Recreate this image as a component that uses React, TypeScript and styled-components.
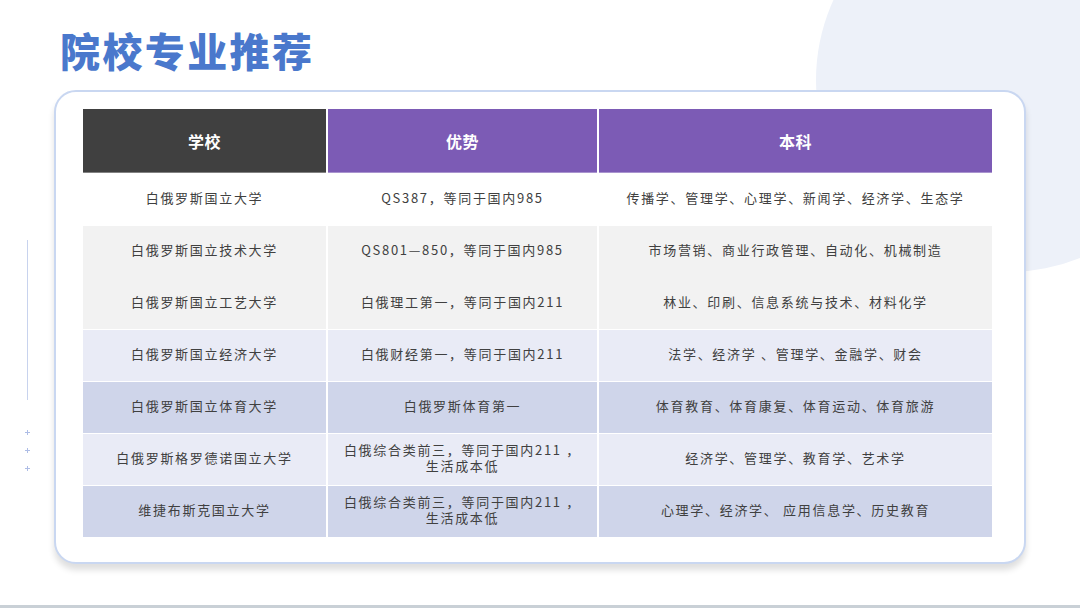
import React from "react";
import styled, { createGlobalStyle } from "styled-components";

const GlobalStyle = createGlobalStyle`
  html, body { margin: 0; padding: 0; background: #ffffff; }
  body { font-family: "Noto Sans CJK SC", "Noto Sans", sans-serif; }
  * { box-sizing: border-box; }
`;

const Page = styled.div`
  position: relative;
  width: 1080px;
  height: 608px;
  overflow: hidden;
  background: #ffffff;
  display: flex;
  flex-direction: column;
`;

const Circle = styled.div`
  position: absolute;
  left: 816px;
  top: -112px;
  width: 384px;
  height: 384px;
  border-radius: 50%;
  background: #edf1f9;
`;

const Main = styled.div`
  position: relative;
  flex: 1;
  display: flex;
  flex-direction: row;
`;

const Rail = styled.div`
  width: 54px;
  display: flex;
  flex-direction: column;
  align-items: center;
  padding-top: 240px;
`;

const RailLine = styled.div`
  width: 1px;
  height: 160px;
  background: #c8d3ee;
  margin-bottom: 30px;
`;

const Plus = styled.div`
  width: 5px;
  height: 5px;
  margin-bottom: 13px;
  background:
    linear-gradient(#aebde6, #aebde6) center / 5px 1px no-repeat,
    linear-gradient(#aebde6, #aebde6) center / 1px 5px no-repeat;
`;

const Content = styled.div`
  display: flex;
  flex-direction: column;
`;

const Title = styled.h1`
  margin: 30px 0 0 6px;
  height: 40px;
  font-family: "Noto Sans CJK SC", sans-serif;
  font-weight: 900;
  font-size: 40px;
  line-height: 40px;
  letter-spacing: 2.4px;
  color: #4a78cc;
`;

const Card = styled.div`
  margin-top: 20px;
  width: 972px;
  border: 2px solid #c9d7f1;
  border-radius: 22px;
  background: #ffffff;
  padding: 17px 32px 25px 27px;
  box-shadow: 0 6px 6px rgba(0, 0, 0, 0.13);
`;

const Table = styled.div`
  display: flex;
  flex-direction: column;
  width: 909px;
`;

const cols = "243px 269px 393px";

const HeadRow = styled.div`
  display: grid;
  grid-template-columns: ${cols};
  column-gap: 2px;
  height: 64px;
  background: #ffffff;
`;

const HeadCell = styled.div<{ $dark?: boolean }>`
  display: flex;
  align-items: center;
  justify-content: center;
  background: ${(p) => (p.$dark ? "#404040" : "#7c5bb5")};
  box-shadow: inset 0 -1px 0 rgba(255, 255, 255, 0.35);
  color: #ffffff;
  font-weight: 700;
  font-size: 16px;
  letter-spacing: 0.5px;
`;

type Tone = "white" | "grey" | "lilac" | "blue";
const toneBg: Record<Tone, string> = {
  white: "#ffffff",
  grey: "#f2f2f2",
  lilac: "#e9ebf6",
  blue: "#cfd5ea",
};

const Row = styled.div<{ $joined?: boolean }>`
  display: grid;
  grid-template-columns: ${cols};
  column-gap: 2px;
  height: 52px;
  background: #ffffff;
  border-top: ${(p) => (p.$joined ? "0" : "1px solid #ffffff")};
`;

const Cell = styled.div<{ $tone: Tone }>`
  display: flex;
  align-items: center;
  justify-content: center;
  text-align: center;
  padding-bottom: 3px;
  background: ${(p) => toneBg[p.$tone]};
  color: #404040;
  font-size: 13px;
  line-height: 16px;
  letter-spacing: 1.7px;
`;

const BottomBar = styled.div`
  height: 3px;
  background: #c9d0d6;
`;

type RowData = { school: string; adv: React.ReactNode; major: string; tone: Tone; joined?: boolean };

const twoLine = (
  <>
    白俄综合类前三，等同于国内211 ，
    <br />
    生活成本低
  </>
);

const rows: RowData[] = [
  { school: "白俄罗斯国立大学", adv: "QS387，等同于国内985", major: "传播学、管理学、心理学、新闻学、经济学、生态学", tone: "white" },
  { school: "白俄罗斯国立技术大学", adv: "QS801—850，等同于国内985", major: "市场营销、商业行政管理、自动化、机械制造", tone: "grey" },
  { school: "白俄罗斯国立工艺大学", adv: "白俄理工第一，等同于国内211", major: "林业、印刷、信息系统与技术、材料化学", tone: "grey", joined: true },
  { school: "白俄罗斯国立经济大学", adv: "白俄财经第一，等同于国内211", major: "法学、经济学 、管理学、金融学、财会", tone: "lilac" },
  { school: "白俄罗斯国立体育大学", adv: "白俄罗斯体育第一", major: "体育教育、体育康复、体育运动、体育旅游", tone: "blue" },
  { school: "白俄罗斯格罗德诺国立大学", adv: twoLine, major: "经济学、管理学、教育学、艺术学", tone: "lilac" },
  { school: "维捷布斯克国立大学", adv: twoLine, major: "心理学、经济学、 应用信息学、历史教育", tone: "blue" },
];

export default function App() {
  return (
    <>
      <GlobalStyle />
      <Page>
        <Circle />
        <Main>
          <Rail>
            <RailLine />
            <Plus />
            <Plus />
            <Plus />
          </Rail>
          <Content>
            <Title>院校专业推荐</Title>
            <Card>
              <Table>
                <HeadRow>
                  <HeadCell $dark>学校</HeadCell>
                  <HeadCell>优势</HeadCell>
                  <HeadCell>本科</HeadCell>
                </HeadRow>
                {rows.map((r, i) => (
                  <Row key={i} $joined={r.joined}>
                    <Cell $tone={r.tone}>{r.school}</Cell>
                    <Cell $tone={r.tone}>{r.adv}</Cell>
                    <Cell $tone={r.tone}>{r.major}</Cell>
                  </Row>
                ))}
              </Table>
            </Card>
          </Content>
        </Main>
        <BottomBar />
      </Page>
    </>
  );
}
